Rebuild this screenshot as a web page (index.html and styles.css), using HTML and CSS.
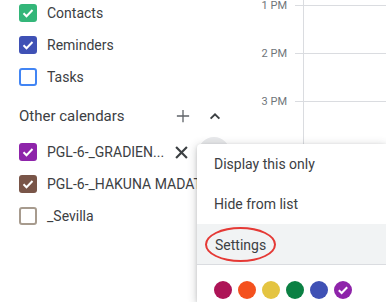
FILE: index.html
```html
<!DOCTYPE html>
<html lang="en">
<head>
  <meta charset="UTF-8" />
  <title>Calendar - My calendars</title>
  <link rel="stylesheet" href="styles.css">
</head>
<body>
  <div class="page">
    <aside class="sidebar">
      <ul class="cal-list">
        <li class="cal-item">
          <span class="box checked green"><svg viewBox="0 0 18 18"><path d="M4.5 9.2l3 3 6-6.2" /></svg></span>
          <span class="cal-name">Contacts</span>
        </li>
        <li class="cal-item">
          <span class="box checked indigo"><svg viewBox="0 0 18 18"><path d="M4.5 9.2l3 3 6-6.2" /></svg></span>
          <span class="cal-name">Reminders</span>
        </li>
        <li class="cal-item">
          <span class="box blue-line"></span>
          <span class="cal-name">Tasks</span>
        </li>
      </ul>

      <div class="section-head">
        <span class="section-title">Other calendars</span>
        <span class="head-icons">
          <svg class="icon plus" viewBox="0 0 16 16"><path d="M8 1v14M1 8h14" /></svg>
          <svg class="icon chevron" viewBox="0 0 16 16"><path d="M3 11l5-5 5 5" /></svg>
        </span>
      </div>

      <ul class="cal-list">
        <li class="cal-item">
          <span class="box checked purple"><svg viewBox="0 0 18 18"><path d="M4.5 9.2l3 3 6-6.2" /></svg></span>
          <span class="cal-name short">PGL-6-_GRADIEN...</span>
          <svg class="icon close" viewBox="0 0 12 12"><path d="M1 1l10 10M11 1L1 11" /></svg>
        </li>
        <li class="cal-item">
          <span class="box checked brown"><svg viewBox="0 0 18 18"><path d="M4.5 9.2l3 3 6-6.2" /></svg></span>
          <span class="cal-name cut">PGL-6-_HAKUNA MADATA</span>
        </li>
        <li class="cal-item">
          <span class="box taupe-line"></span>
          <span class="cal-name">_Sevilla</span>
        </li>
      </ul>
    </aside>

    <section class="day">
      <div class="gutter">
        <div class="hour"><span class="label">1 PM</span><span class="tick"></span></div>
        <div class="hour"><span class="label">2 PM</span><span class="tick"></span></div>
        <div class="hour"><span class="label">3 PM</span><span class="tick"></span></div>
      </div>
      <div class="column">
        <div class="slot"></div>
        <div class="slot"></div>
        <div class="slot"></div>
        <div class="slot"></div>
      </div>
    </section>
  </div>

  <span class="hover-ring"></span>

  <div class="menu">
    <div class="menu-item">Display this only</div>
    <div class="menu-item">Hide from list</div>
    <div class="menu-item active"><span class="mark">Settings</span></div>
    <div class="swatches">
      <span class="dot" style="background:#ad1457"></span>
      <span class="dot" style="background:#f4511e"></span>
      <span class="dot" style="background:#e4c441"></span>
      <span class="dot" style="background:#0b8043"></span>
      <span class="dot" style="background:#3f51b5"></span>
      <span class="dot" style="background:#8e24aa"><svg viewBox="0 0 18 18"><path d="M4.8 9.3l2.8 2.7 5.6-5.8" /></svg></span>
    </div>
  </div>
</body>
</html>
```

FILE: styles.css
```css
body {
  margin: 0;
  font-family: Roboto, "Liberation Sans", sans-serif;
  background: #ffffff;
  color: #3c4043;
  overflow: hidden;
}

.page {
  display: flex;
  height: 302px;
  overflow: hidden;
}

.sidebar {
  width: 256px;
  flex-shrink: 0;
}

.cal-list {
  list-style: none;
  margin: 0;
  padding: 0;
}

.sidebar > .cal-list:first-child {
  margin-top: -3px;
}

.cal-item {
  display: flex;
  align-items: center;
  height: 32px;
  padding-left: 19px;
  font-size: 14px;
  white-space: nowrap;
}

.box {
  width: 18px;
  height: 18px;
  box-sizing: border-box;
  border-radius: 3px;
  margin-right: 10px;
  flex-shrink: 0;
  display: flex;
}

.box svg {
  width: 18px;
  height: 18px;
}

.box svg path,
.dot svg path {
  fill: none;
  stroke: #ffffff;
  stroke-width: 2;
}

.green { background: #33b679; }
.indigo { background: #3f51b5; }
.purple { background: #8e24aa; }
.brown { background: #795548; }

.blue-line {
  border: 2px solid #4285f4;
}

.taupe-line {
  border: 2px solid #a79b8e;
}

.cal-name.short {
  width: 128px;
}

.cal-name.cut {
  width: 150px;
  overflow: hidden;
}

.icon path {
  fill: none;
  stroke: #5f6368;
  stroke-width: 1.6;
}

.close {
  width: 13px;
  height: 13px;
}

.close path {
  stroke: #3c4043;
  stroke-width: 2;
}

.section-head {
  display: flex;
  align-items: center;
  justify-content: space-between;
  height: 40px;
  padding: 3px 0 0 19px;
  font-size: 15px;
}

.head-icons {
  display: flex;
  align-items: center;
  gap: 18px;
  margin-right: 34px;
}

.plus {
  width: 14px;
  height: 14px;
}

.plus path {
  stroke: #5f6368;
  stroke-width: 1.5;
}

.chevron {
  width: 14px;
  height: 14px;
}

.chevron path {
  stroke: #3c4043;
  stroke-width: 2.2;
}

.day {
  flex: 1;
  display: flex;
  padding-top: 5px;
}

.gutter {
  width: 47px;
}

.hour {
  display: flex;
  height: 48px;
}

.label {
  width: 31px;
  margin-top: -6px;
  margin-right: 8px;
  line-height: 13px;
  font-size: 11px;
  color: #70757a;
  text-align: right;
}

.tick {
  flex: 1;
  border-top: 1px solid #dadce0;
}

.column {
  flex: 1;
  border-left: 1px solid #dadce0;
  margin-top: -5px;
  padding-top: 5px;
}

.slot {
  height: 47px;
  border-top: 1px solid #dadce0;
}

.hover-ring {
  position: absolute;
  left: 198px;
  top: 137px;
  width: 32px;
  height: 32px;
  border-radius: 50%;
  background: #e8e9eb;
}

.menu {
  position: absolute;
  left: 197px;
  top: 144px;
  right: 0;
  bottom: 0;
  background: #ffffff;
  border-radius: 4px 0 0 0;
  box-shadow: 0 2px 10px rgba(60, 64, 67, 0.3), 0 1px 3px rgba(60, 64, 67, 0.15);
}

.menu-item {
  display: flex;
  align-items: center;
  height: 40px;
  padding-left: 17px;
  font-size: 14px;
  color: #3c4043;
}

.menu-item.active {
  background: #f1f3f4;
  padding-left: 8px;
}

.mark {
  display: flex;
  align-items: center;
  box-sizing: border-box;
  width: 71px;
  height: 35px;
  padding-left: 8px;
  margin-top: 1px;
  border: 2px solid #e53935;
  border-radius: 50%;
}

.swatches {
  display: flex;
  gap: 6px;
  border-top: 1px solid #dadce0;
  padding: 16px 0 0 17px;
}

.dot {
  width: 18px;
  height: 18px;
  border-radius: 50%;
  display: flex;
}

.dot svg {
  width: 18px;
  height: 18px;
}
```
